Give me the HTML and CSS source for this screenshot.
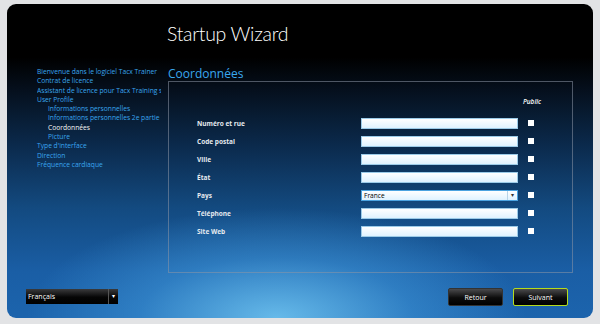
FILE: index.html
```html
<!DOCTYPE html>
<html lang="fr">
<head>
  <meta charset="UTF-8">
  <title>Startup Wizard</title>
  <link rel="stylesheet" href="styles.css">
</head>
<body>

  <div class="window">
    <h1 class="title">Startup Wizard</h1>

    <div class="content">
      <ul class="nav">
        <li>Bienvenue dans le logiciel Tacx Trainer</li>
        <li>Contrat de licence</li>
        <li class="clip">Assistant de licence pour Tacx Training software</li>
        <li>User Profile</li>
        <li class="sub">Informations personnelles</li>
        <li class="sub">Informations personnelles 2e partie</li>
        <li class="sub current">Coordonnées</li>
        <li class="sub">Picture</li>
        <li>Type d'interface</li>
        <li>Direction</li>
        <li>Fréquence cardiaque</li>
      </ul>

      <div class="main">
        <h2>Coordonnées</h2>
        <div class="panel">
          <div class="row head"><span class="public">Public</span></div>
          <div class="row"><label>Numéro et rue</label><span class="field"></span><span class="check"></span></div>
          <div class="row"><label>Code postal</label><span class="field"></span><span class="check"></span></div>
          <div class="row"><label>Ville</label><span class="field"></span><span class="check"></span></div>
          <div class="row"><label>État</label><span class="field"></span><span class="check"></span></div>
          <div class="row"><label>Pays</label><span class="field select">France<span class="arrow">▾</span></span><span class="check"></span></div>
          <div class="row"><label>Téléphone</label><span class="field"></span><span class="check"></span></div>
          <div class="row"><label>Site Web</label><span class="field"></span><span class="check"></span></div>
        </div>
      </div>
    </div>

    <div class="footer">
      <div class="lang">Français<span class="arrow">▾</span></div>
      <div class="buttons">
        <button>Retour</button>
        <button class="primary">Suivant</button>
      </div>
    </div>
  </div>

</body>
</html>
```

FILE: styles.css
```css
body { margin: 0; background: #e2e3e5; font-family: "Open Sans", "Noto Sans", sans-serif; }
.window {
  margin: 4px 0 0 7px; width: 586px; height: 314px; border-radius: 9px; box-sizing: border-box;
  display: flex; flex-direction: column; overflow: hidden; color: #fff;
  background:
    radial-gradient(ellipse 250px 110px at 46% 100%, rgba(110,195,240,0.9), rgba(70,160,225,0.45) 55%, rgba(40,120,200,0) 100%),
    linear-gradient(to bottom, #000 0, #000 17%, #050f1c 27%, #0b2a4c 45%, #134a80 65%, #1a5ea5 85%, #1c64ad 100%);
}
.title {
  margin: 17px 0 0 160px; height: 40px; font-family: Lato, "Open Sans", sans-serif;
  font-size: 19.5px; font-weight: 300; line-height: 26px; letter-spacing: -0.3px;
}
.content { display: flex; }
.nav {
  flex: none; list-style: none; margin: 6px 0 0 0; padding: 0 0 0 30px; width: 161px; box-sizing: border-box;
  font-size: 6.7px; line-height: 9.3px; color: #3aa6ee;
}
.nav li { white-space: nowrap; }
.nav .clip { overflow: hidden; width: 124px; }
.nav .sub { padding-left: 11px; }
.nav .current { color: #f4f4f4; }
.main { flex: none; width: 405px; }
h2 { margin: 6px 0 0; font-size: 12px; font-weight: 400; line-height: 14px; color: #3aa8f0; }
.panel { height: 192px; box-sizing: border-box; border: 1px solid rgba(140,150,165,0.55); padding: 12px 0 0 28px; }
.row { display: flex; align-items: center; height: 18px; }
.row.head { height: 14px; margin-bottom: 6px; justify-content: flex-end; padding-right: 31px; }
.public { font-size: 6.5px; font-style: italic; font-weight: 600; }
.row label { width: 164px; font-size: 6.5px; font-weight: 700; color: #e6eaef; }
.field {
  width: 157px; height: 11px; box-sizing: border-box; border: 1px solid #9ccbe8;
  background: linear-gradient(to bottom, #ffffff, #dff2ff); color: #000; font-size: 6.6px; line-height: 9px; padding-left: 2px;
}
.select { display: flex; justify-content: space-between; border-color: #4ba3e0; }
.select .arrow { width: 9px; border-left: 1px solid #b8d4e8; font-size: 6px; text-align: center; color: #333; }
.check { width: 6px; height: 6px; background: #fff; margin-left: 10px; }
.footer { margin-top: auto; height: 30px; display: flex; justify-content: space-between; align-items: flex-start; padding: 0 25px 0 19px; }
.lang {
  margin-top: 1px; width: 92px; height: 15px; box-sizing: border-box; display: flex; justify-content: space-between;
  background: linear-gradient(to bottom, #3a3a3c, #050505 55%, #000); font-size: 7px; line-height: 15px; padding-left: 2px;
}
.lang .arrow { width: 9px; border-left: 1px solid #555; text-align: center; font-size: 6px; }
.buttons { display: flex; gap: 10px; }
button {
  width: 55px; height: 18px; border: 1px solid #333; border-radius: 2px; color: #fff; font-family: inherit; font-size: 7px;
  background: linear-gradient(to bottom, #4a4a4c, #0c0c0c 55%, #000); padding: 0;
}
button.primary { border: 1px solid #b4dc1e; }
```
